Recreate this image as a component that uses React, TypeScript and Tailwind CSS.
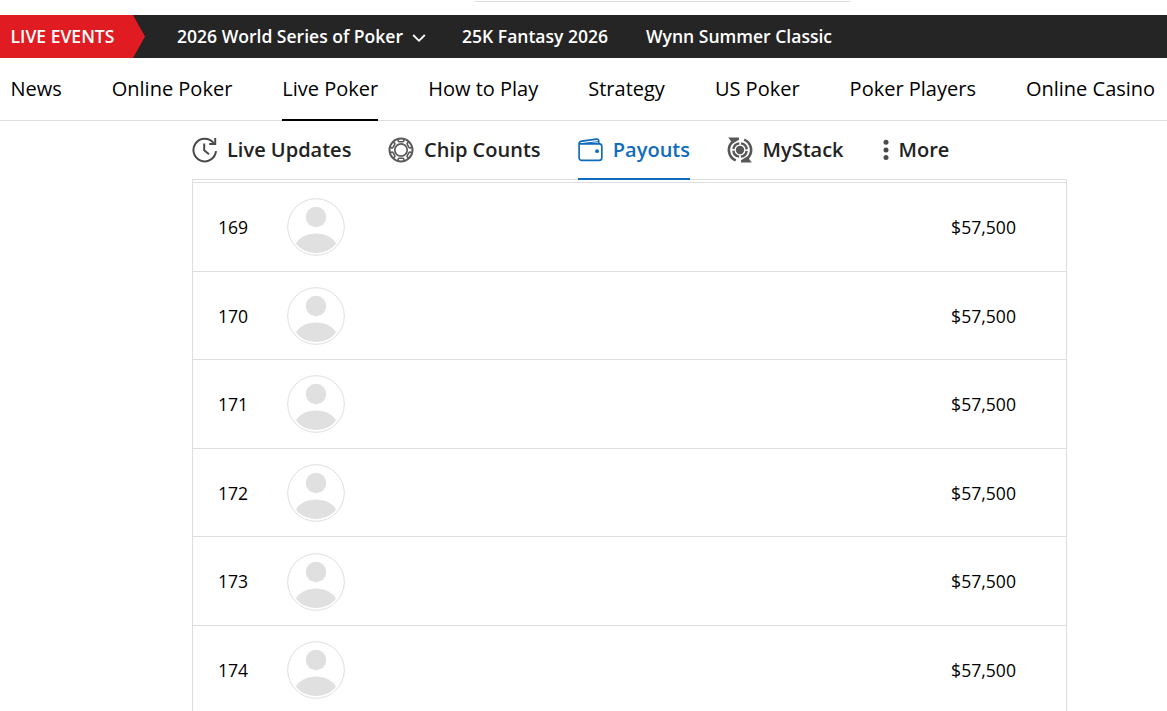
import clsx from "clsx";
import type { ReactNode } from "react";

const navItems = [
  "News",
  "Online Poker",
  "Live Poker",
  "How to Play",
  "Strategy",
  "US Poker",
  "Poker Players",
  "Online Casino",
];

const payouts = [169, 170, 171, 172, 173, 174].map((place) => ({
  place,
  prize: "$57,500",
}));

function ClockIcon() {
  return (
    <svg width="26" height="26" viewBox="0 0 26 26" fill="none" stroke="#4a4a4a" strokeWidth="2">
      <path d="M24 14.2A11.3 11.3 0 1 1 21.6 6" />
      <path d="M23.2 1v6h-6" />
      <path d="M12.2 6.6v6.6l4.8 4" />
    </svg>
  );
}

function ChipIcon() {
  return (
    <svg width="26" height="26" viewBox="0 0 26 26" fill="none" stroke="#5a5a5a">
      <circle cx="13" cy="13" r="11.5" strokeWidth="2" />
      <circle cx="13" cy="13" r="6.2" strokeWidth="1.7" />
      {[0, 60, 120, 180, 240, 300].map((deg) => (
        <path
          key={deg}
          d="M10.1 2v1.6q0 1.2 1.2 1.2h3.400q1.200 0 1.200-1.200V2"
          strokeWidth="1.6"
          transform={`rotate(${deg} 13 13)`}
        />
      ))}
    </svg>
  );
}

function WalletIcon() {
  return (
    <svg width="26" height="26" viewBox="0 0 26 26" fill="none" stroke="#0f6cbd" strokeWidth="1.7" strokeLinejoin="round">
      <path d="M1.1 6.8v14a2.6 2.6 0 0 0 2.6 2.6h17.7a2.6 2.6 0 0 0 2.6-2.6V9.4a2.6 2.6 0 0 0-2.6-2.6H1.1z" />
      <path d="M1.1 6.8c0-1.7.8-2.4 2.6-2.7L18.5 2c1.5-.2 2.2.5 2.3 1.7l.2 3" />
      <path d="M4.8 6.3L20.8 4.6" strokeWidth="1" />
      <circle cx="19.2" cy="14.2" r="1.9" fill="#0f6cbd" stroke="none" />
    </svg>
  );
}

function StackIcon() {
  return (
    <svg width="26" height="26" viewBox="0 0 26 26" fill="none" stroke="#585858">
      <path d="M8.8 23.4A11.2 11.2 0 0 1 6 4.4" strokeWidth="2.6" />
      <path d="M17.2 2.6A11.2 11.2 0 0 1 20 21.6" strokeWidth="2.6" />
      <path d="M1.2.6H12v2.200L5.800 6.600z" fill="#585858" stroke="none" />
      <path d="M24.800 25.400H14v-2.200l6.200-3.800z" fill="#585858" stroke="none" />
      <circle cx="13" cy="13" r="6.7" strokeWidth="2.4" strokeDasharray="8.8 1.724" strokeDashoffset="-0.860" />
      <circle cx="13" cy="13" r="4.2" fill="#585858" stroke="none" />
    </svg>
  );
}

function MoreIcon() {
  return (
    <svg width="6" height="22" viewBox="0 0 6 22" fill="#4a4a4a">
      <circle cx="3" cy="3.3" r="2.5" />
      <circle cx="3" cy="10.9" r="2.5" />
      <circle cx="3" cy="18.5" r="2.5" />
    </svg>
  );
}

function Avatar() {
  return (
    <svg width="58" height="58" viewBox="0 0 58 58" className="ml-[39px]">
      <circle cx="29" cy="29" r="28.3" fill="#fff" stroke="#dedede" />
      <circle cx="29" cy="19" r="10.2" fill="#e0e0e0" />
      <path d="M9 45.5C13 39 20 35.6 29 35.6S45 39 49 45.5C44.5 51.5 37.5 55 29 55S13.5 51.5 9 45.5z" fill="#e0e0e0" />
    </svg>
  );
}

function Tab({
  icon,
  label,
  active,
  className,
}: {
  icon: ReactNode;
  label: string;
  active?: boolean;
  className?: string;
}) {
  return (
    <a
      className={clsx(
        "relative flex h-[57px] shrink-0 items-center whitespace-nowrap text-[20px] font-semibold",
        active ? "text-[#0f6cbd]" : "text-[#222]",
        className
      )}
    >
      {icon}
      <span>{label}</span>
      {active && <span className="absolute inset-x-0 bottom-[-2px] h-[2px] bg-[#0f6cbd]" />}
    </a>
  );
}

export default function App() {
  return (
    <div className="h-[711px] w-[1167px] overflow-hidden bg-white font-['Open_Sans',sans-serif] text-black">
      <div className="h-[15px]">
        <div className="ml-[474px] h-[2px] w-[377px] rounded-b-[6px] border-b border-[#dcdcdc]" />
      </div>

      {/* Live events bar */}
      <div className="flex h-[43px] items-center bg-[#252525] text-[17.55px] font-semibold whitespace-nowrap text-white">
        <div className="flex h-full w-[145px] items-center bg-[#e11b22] pl-[10.5px] [clip-path:polygon(0_0,133px_0,100%_50%,133px_100%,0_100%)]">
          LIVE EVENTS
        </div>
        <a className="ml-8 flex w-[285px] items-center">
          <span>2026 World Series of Poker</span>
          <svg width="14" height="10" viewBox="0 0 14 10" fill="none" stroke="#fff" strokeWidth="1.8" className="ml-[9px] mt-[2px]">
            <path d="M1.2 2L7 7.8L12.8 2" />
          </svg>
        </a>
        <a className="w-[184px]">25K Fantasy 2026</a>
        <a>Wynn Summer Classic</a>
      </div>

      {/* Main nav */}
      <nav className="flex h-[63px] gap-[50px] border-b border-[#dedede] pl-[10.4px] text-[20px] whitespace-nowrap">
        {navItems.map((item) => (
          <a
            key={item}
            className={clsx(
              "flex h-[63px] shrink-0 items-center border-b-2 pt-px",
              item === "Live Poker" ? "border-black" : "border-transparent"
            )}
          >
            {item}
          </a>
        ))}
      </nav>

      {/* Tabs */}
      <div className="ml-[192px] flex h-[59px] w-[875px] border-b border-[#dedede]">
        <Tab icon={<ClockIcon />} label="Live Updates" className="w-[196px] gap-[9px]" />
        <Tab icon={<ChipIcon />} label="Chip Counts" className="w-[190px] gap-[10px]" />
        <Tab icon={<WalletIcon />} label="Payouts" active className="w-[112px] gap-[9px]" />
        <Tab icon={<StackIcon />} label="MyStack" className="ml-[36.5px] w-[156px] gap-[10px]" />
        <Tab icon={<MoreIcon />} label="More" className="gap-[10px]" />
      </div>

      {/* Payout table */}
      <div className="ml-[192px] w-[875px] border-x border-[#dedede] pt-[2px] text-[17.6px]">
        <div className="border-t border-[#dedede]">
          {payouts.map((row) => (
            <div key={row.place} className="flex h-[88.6px] items-center border-b border-[#dedede] pt-[0.8px]">
              <span className="w-[55px] pl-[25px]">{row.place}</span>
              <Avatar />
              <span className="ml-auto pr-[50px]">{row.prize}</span>
            </div>
          ))}
        </div>
      </div>
    </div>
  );
}
